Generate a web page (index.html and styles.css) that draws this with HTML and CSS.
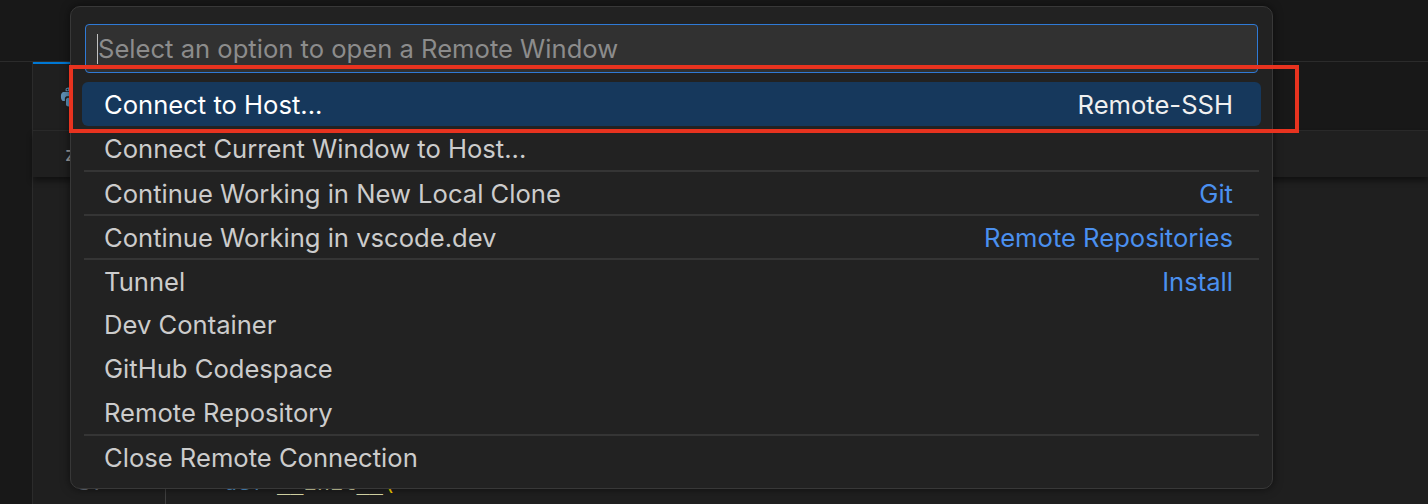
FILE: index.html
```html
<!DOCTYPE html>
<html>
<head>
<meta charset="utf-8">
<link rel="stylesheet" href="styles.css">
</head>
<body>
<div class="workbench">
  <div class="titlebar"></div>
  <div class="main">
    <div class="activity"></div>
    <div class="group">
      <div class="tabs">
        <div class="tab active">
          <svg class="py" width="16" height="16" viewBox="0 0 16 16"><path d="M7.9 1C4.6 1 4.8 2.4 4.8 2.4v1.5h3.2v.5H3.5S1.4 4.2 1.4 7.6s1.8 3.3 1.8 3.3h1.1V9.3s-.1-1.8 1.8-1.8h3.1s1.7 0 1.7-1.7V2.8S11.2 1 7.9 1zM6.1 2a.6.6 0 1 1 0 1.2.6.6 0 0 1 0-1.2z" fill="#5d8fb5"/><path d="M8.1 15c3.3 0 3.1-1.4 3.1-1.4v-1.5H8v-.5h4.5s2.1.2 2.1-3.2-1.8-3.3-1.8-3.3h-1.1v1.6s.1 1.8-1.8 1.8H6.8s-1.7 0-1.7 1.7v3s-.3 1.8 3 1.8zm1.8-1a.6.6 0 1 1 0-1.2.6.6 0 0 1 0 1.2z" fill="#5d8fb5"/></svg>
        </div>
      </div>
      <div class="breadcrumb"><span class="crumb">z</span></div>
      <div class="editor">
        <div class="code-line"><span class="ln">37</span><span class="guide"></span><span class="code"><span class="kw">def</span> <span class="fn">__init__</span><span class="paren">(</span></span></div>
      </div>
    </div>
  </div>
</div>

<div class="quick-input">
  <div class="qi-box">
    <span class="caret"></span><span class="placeholder">Select an option to open a Remote Window</span>
  </div>
  <div class="qi-list">
    <div class="row selected"><span class="label">Connect to Host...</span><span class="desc">Remote-SSH</span></div>
    <div class="row"><span class="label">Connect Current Window to Host...</span></div>
    <div class="row sep"><span class="label">Continue Working in New Local Clone</span><span class="desc">Git</span></div>
    <div class="row sep"><span class="label">Continue Working in vscode.dev</span><span class="desc">Remote Repositories</span></div>
    <div class="row sep"><span class="label">Tunnel</span><span class="desc">Install</span></div>
    <div class="row"><span class="label">Dev Container</span></div>
    <div class="row"><span class="label">GitHub Codespace</span></div>
    <div class="row"><span class="label">Remote Repository</span></div>
    <div class="row sep"><span class="label">Close Remote Connection</span></div>
  </div>
</div>

<div class="annotation"></div>
</body>
</html>
```

FILE: styles.css
```css
* { box-sizing: border-box; }
html, body {
  margin: 0;
  padding: 0;
  width: 1428px;
  height: 504px;
  overflow: hidden;
  background: #1f1f1f;
  font-family: "Inter", "Liberation Sans", sans-serif;
}
body { position: relative; }

.workbench {
  display: flex;
  flex-direction: column;
  height: 504px;
}
.titlebar {
  height: 62px;
  background: #181818;
  border-bottom: 1px solid #2b2b2b;
  flex: none;
}
.main {
  flex: 1;
  display: flex;
}
.activity {
  width: 33px;
  background: #181818;
  border-right: 1px solid #2b2b2b;
  flex: none;
}
.group {
  flex: 1;
  display: flex;
  flex-direction: column;
}
.tabs {
  height: 69px;
  background: #181818;
  border-bottom: 1px solid #2b2b2b;
  display: flex;
  flex: none;
}
.tab {
  width: 320px;
  display: flex;
  align-items: center;
  padding-left: 26px;
}
.tab.active {
  background: #1f1f1f;
  border-top: 2px solid #0078d4;
}
.py { width: 22px; height: 22px; }
.breadcrumb {
  height: 46px;
  background: #1f1f1f;
  display: flex;
  align-items: center;
  padding-left: 32px;
  color: #a0a0a0;
  font-size: 20px;
  flex: none;
  box-shadow: 0 4px 6px rgba(0,0,0,0.45);
  position: relative;
  z-index: 1;
}
.editor {
  flex: 1;
  background: #1f1f1f;
  display: flex;
  flex-direction: column;
  justify-content: flex-end;
  padding-bottom: 6px;
}
.code-line {
  display: flex;
  font-family: "DejaVu Sans Mono", monospace;
  font-size: 22px;
  line-height: 30px;
  color: #cccccc;
  white-space: pre;
}
.ln { width: 72px; text-align: right; color: #6e7681; flex: none; }
.guide { width: 1px; margin-left: 60px; margin-bottom: -10px; background: #404040; flex: none; }
.code { padding-left: 58px; }
.kw { color: #569cd6; }
.fn { color: #dcdcaa; }
.paren { color: #ffd700; }

.quick-input {
  position: absolute;
  z-index: 5;
  left: 70px;
  top: 6px;
  width: 1203px;
  height: 483px;
  background: #222222;
  border: 1px solid #383838;
  border-radius: 10px;
  box-shadow: 0 0 10px rgba(0,0,0,0.55);
  padding: 17px 13px 0 13px;
}
.qi-box {
  height: 49px;
  background: #313131;
  border: 1px solid #2f7ad6;
  border-radius: 4px;
  display: flex;
  align-items: center;
  padding-left: 11px;
  margin: 0 1px;
}
.caret {
  width: 1px;
  height: 30px;
  background: #c0c0c0;
  margin-right: 0;
}
.placeholder {
  color: #8c8c8c;
  font-size: 25.6px;
}
.qi-list {
  margin-top: 9px;
  display: flex;
  flex-direction: column;
}
.row {
  height: 44px;
  display: flex;
  align-items: center;
  justify-content: space-between;
  padding: 0 28px 0 22px;
  margin: 0 -2px;
  font-size: 25.6px;
  color: #cccccc;
  border-radius: 6px;
  position: relative;
}
.row.sep { padding-top: 2px; }
.row.sep::before {
  content: "";
  position: absolute;
  left: 2px;
  right: 2px;
  top: 0;
  border-top: 2px solid #353535;
}
.row.selected {
  background: #16385c;
  color: #ffffff;
}
.desc { color: #4b90ef; }
.row.selected .desc { color: #f0f0f0; }

.annotation {
  position: absolute;
  z-index: 6;
  left: 69px;
  top: 65px;
  width: 1230px;
  height: 68px;
  border: 4px solid #e8331f;
}
```
